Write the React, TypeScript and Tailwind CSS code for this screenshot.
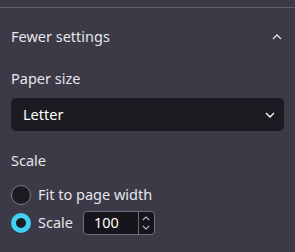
import React, { useState } from 'react';

function ChevronUp({ className = '' }: { className?: string }) {
  return (
    <svg viewBox="0 0 10 6" className={className} fill="none" stroke="currentColor" strokeWidth="1.3">
      <path d="M1 5l4-4 4 4" />
    </svg>
  );
}

function ChevronDown({ className = '' }: { className?: string }) {
  return (
    <svg viewBox="0 0 10 6" className={className} fill="none" stroke="currentColor" strokeWidth="1.3">
      <path d="M1 1l4 4 4-4" />
    </svg>
  );
}

export default function App() {
  const [mode, setMode] = useState<'fit' | 'scale'>('scale');
  const [scale, setScale] = useState(100);

  return (
    <div className="w-[295px] h-[252px] bg-[#3c3a47] text-[#e6e5ea] overflow-hidden" style={{ fontFamily: '"Noto Sans", "Open Sans", sans-serif' }}>
      <div className="pt-[7px]">
        <div className="h-px bg-[#5f5e6b]" />
      </div>

      {/* Fewer settings header */}
      <div className="flex items-center justify-between pl-[11px] pr-[13px] mt-[19px] h-[20px]">
        <span className="text-[14.5px]">Fewer settings</span>
        <ChevronUp className="w-[10px] h-[6px] text-[#e6e5ea]" />
      </div>

      {/* Paper size */}
      <div className="pl-[11px] mt-[21px] text-[14.5px] leading-[20px]">Paper size</div>
      <div className="mx-[11px] mt-[10px] h-[33px] rounded-[5px] bg-[#1c1b22] flex items-center justify-between pl-[12px] pr-[9px]">
        <span className="text-[14.5px] text-white">Letter</span>
        <ChevronDown className="w-[10px] h-[6px] text-white" />
      </div>

      {/* Scale */}
      <div className="pl-[11px] mt-[19px] text-[14.5px] leading-[20px]">Scale</div>
      <div className="pl-[11px] mt-[15px] flex flex-col gap-[6px]">
        <button className="flex items-center gap-[7px] h-[20px]" onClick={() => setMode('fit')}>
          <span
            className={
              mode === 'fit'
                ? 'w-[20px] h-[20px] rounded-full border-[5px] border-[#3fd0f4] bg-[#1c1b22]'
                : 'w-[20px] h-[20px] rounded-full border border-[#7c7b86] bg-[#1c1b22]'
            }
          />
          <span className="text-[14.5px]">Fit to page width</span>
        </button>
        <div className="flex items-center h-[24px]">
          <button className="flex items-center gap-[7px]" onClick={() => setMode('scale')}>
            <span
              className={
                mode === 'scale'
                  ? 'w-[20px] h-[20px] rounded-full border-[5px] border-[#3fd0f4] bg-[#1c1b22]'
                  : 'w-[20px] h-[20px] rounded-full border border-[#7c7b86] bg-[#1c1b22]'
              }
            />
            <span className="text-[14.5px]">Scale</span>
          </button>
          <div className="ml-[10px] w-[72px] h-[24px] rounded-[4px] border border-[#6f6e79] bg-[#16151b] flex">
            <div className="flex-1 flex items-center pl-[10px] text-[14.5px] text-white">{scale}</div>
            <div className="w-[16px] border-l border-[#6f6e79] flex flex-col items-center justify-center gap-[4px]">
              <button onClick={() => setScale(scale + 1)}>
                <ChevronUp className="w-[8px] h-[5px] text-[#cfcfd6] block" />
              </button>
              <button onClick={() => setScale(scale - 1)}>
                <ChevronDown className="w-[8px] h-[5px] text-[#cfcfd6] block" />
              </button>
            </div>
          </div>
        </div>
      </div>
    </div>
  );
}
